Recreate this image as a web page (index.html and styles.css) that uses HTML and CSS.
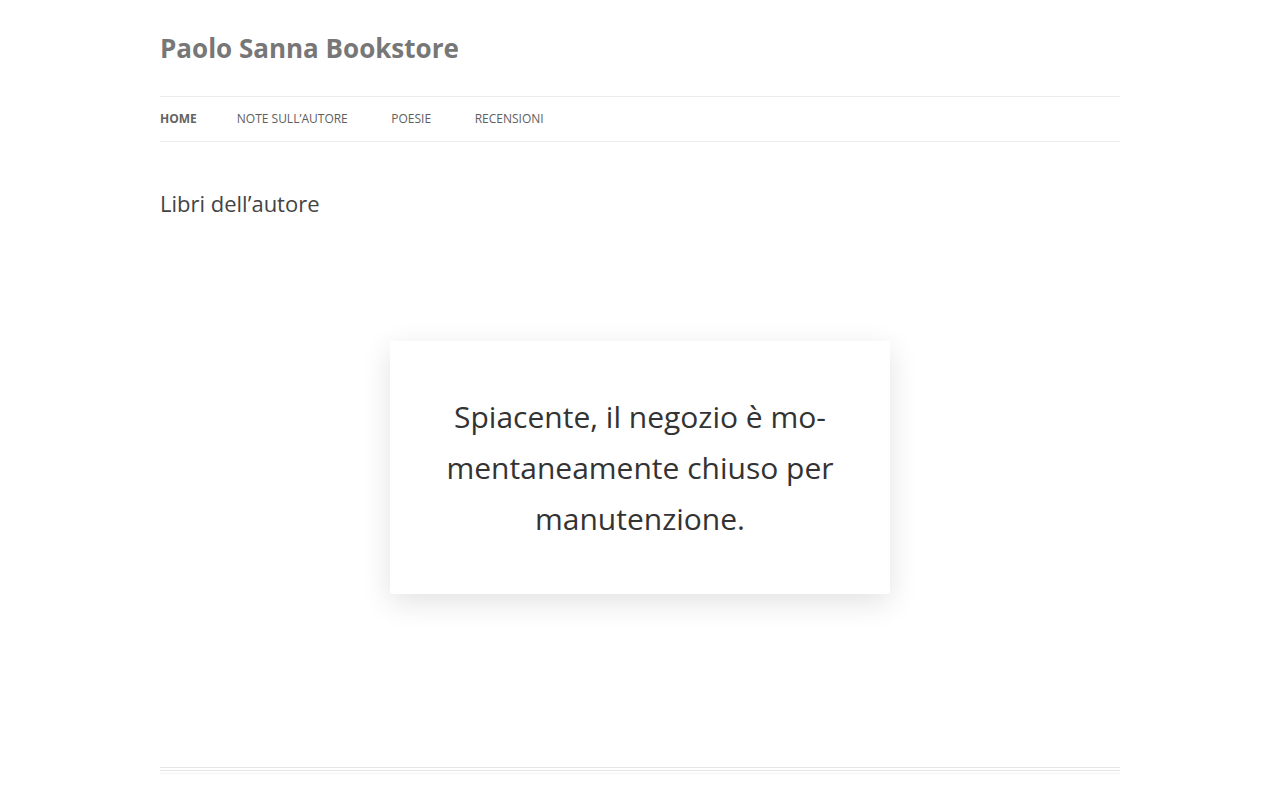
FILE: index.html
```html
<!DOCTYPE html>
<html lang="it">
<head>
<meta charset="utf-8">
<title>Paolo Sanna Bookstore</title>
<link rel="stylesheet" href="styles.css">
</head>
<body>
<div class="site">
  <header class="site-header">
    <h1 class="site-title">Paolo Sanna Bookstore</h1>
    <nav class="main-nav">
      <ul class="menu">
        <li class="current">Home</li>
        <li>Note sull’autore</li>
        <li>Poesie</li>
        <li>Recensioni</li>
      </ul>
    </nav>
  </header>
  <main class="content">
    <h2 class="entry-title">Libri dell’autore</h2>
    <div class="notice">
      <p>Spiacente, il negozio è mo&shy;mentaneamente chiuso per manutenzione.</p>
    </div>
  </main>
  <footer class="site-footer">
    <div class="rule"></div>
    <div class="rule"></div>
    <div class="rule faint"></div>
  </footer>
</div>
</body>
</html>
```

FILE: styles.css
```css
html, body {
  margin: 0;
  padding: 0;
  background: #fff;
}
body {
  font-family: "Open Sans", "Liberation Sans", sans-serif;
  color: #444;
}
.site {
  width: 960px;
  margin: 0 auto;
}
.site-header {
  padding-top: 32px;
}
.site-title {
  margin: 0;
  font-size: 26px;
  line-height: 33px;
  font-weight: 700;
  color: #777;
}
.main-nav {
  margin-top: 31px;
  border-top: 1px solid #ededed;
  border-bottom: 1px solid #ededed;
}
.menu {
  list-style: none;
  margin: 0;
  padding: 0;
  display: flex;
  gap: 43.5px;
}
.menu li {
  font-size: 12px;
  line-height: 44px;
  text-transform: uppercase;
  color: #5e5e5e;
}
.menu li.current {
  font-weight: 700;
  color: #636363;
  margin-right: -3.5px;
}
.content {
  padding-top: 47px;
}
.entry-title {
  margin: 0;
  font-size: 22px;
  line-height: 29px;
  font-weight: 400;
  color: #444;
}
.notice {
  width: 500px;
  box-sizing: border-box;
  margin: 123px auto 0;
  padding: 50px;
  background: #fff;
  border-radius: 3px;
  box-shadow: 0 8px 30px rgba(0, 0, 0, 0.12);
  text-align: center;
}
.notice p {
  margin: 0;
  font-size: 30px;
  line-height: 51px;
  color: #333;
  hyphens: manual;
}
.site-footer {
  margin-top: 173px;
}
.rule {
  height: 1px;
  background: #e6e6e6;
  margin-bottom: 2px;
}
.rule.faint {
  background: #f4f4f4;
}
```
